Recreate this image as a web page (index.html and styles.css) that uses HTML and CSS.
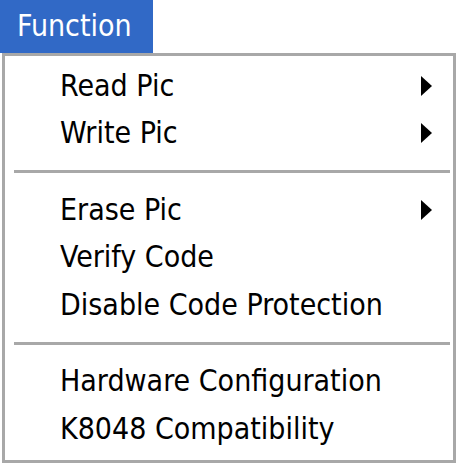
FILE: index.html
```html
<!DOCTYPE html>
<html>
<head>
<meta charset="utf-8">
<link rel="stylesheet" href="styles.css">
</head>
<body>
<div class="title">Function</div>
<div class="menu">
  <div class="item"><span>Read Pic</span><span class="arrow"></span></div>
  <div class="item"><span>Write Pic</span><span class="arrow"></span></div>
  <div class="sep"></div>
  <div class="item"><span>Erase Pic</span><span class="arrow"></span></div>
  <div class="item"><span>Verify Code</span></div>
  <div class="item"><span>Disable Code Protection</span></div>
  <div class="sep"></div>
  <div class="item"><span>Hardware Configuration</span></div>
  <div class="item"><span>K8048 Compatibility</span></div>
</div>
</body>
</html>
```
FILE: styles.css
```css
html, body {
  margin: 0;
  padding: 0;
  background: #ffffff;
}
body {
  width: 462px;
  height: 468px;
  font-family: "DejaVu Sans Condensed", "DejaVu Sans", sans-serif;
  font-size: 30px;
  color: #000;
}
.title {
  width: 153px;
  height: 53px;
  background: #3169c6;
  color: #ffffff;
  box-sizing: border-box;
  padding-left: 17px;
  line-height: 52px;
}
.menu {
  margin-left: 2px;
  width: 454px;
  box-sizing: border-box;
  border: 3px solid #a8a8a8;
  padding: 6px 0 7px 0;
  background: #ffffff;
}
.item {
  height: 47.5px;
  display: flex;
  align-items: center;
  justify-content: space-between;
  padding-left: 55px;
  padding-right: 21px;
  line-height: 1;
}
.arrow {
  width: 0;
  height: 0;
  border-top: 10px solid transparent;
  border-bottom: 10px solid transparent;
  border-left: 11px solid #000;
}
.sep {
  height: 29px;
  display: flex;
  align-items: center;
  padding: 0 3px 0 9px;
}
.sep::before {
  content: "";
  flex: 1;
  height: 3px;
  background: #a8a8a8;
}
```
